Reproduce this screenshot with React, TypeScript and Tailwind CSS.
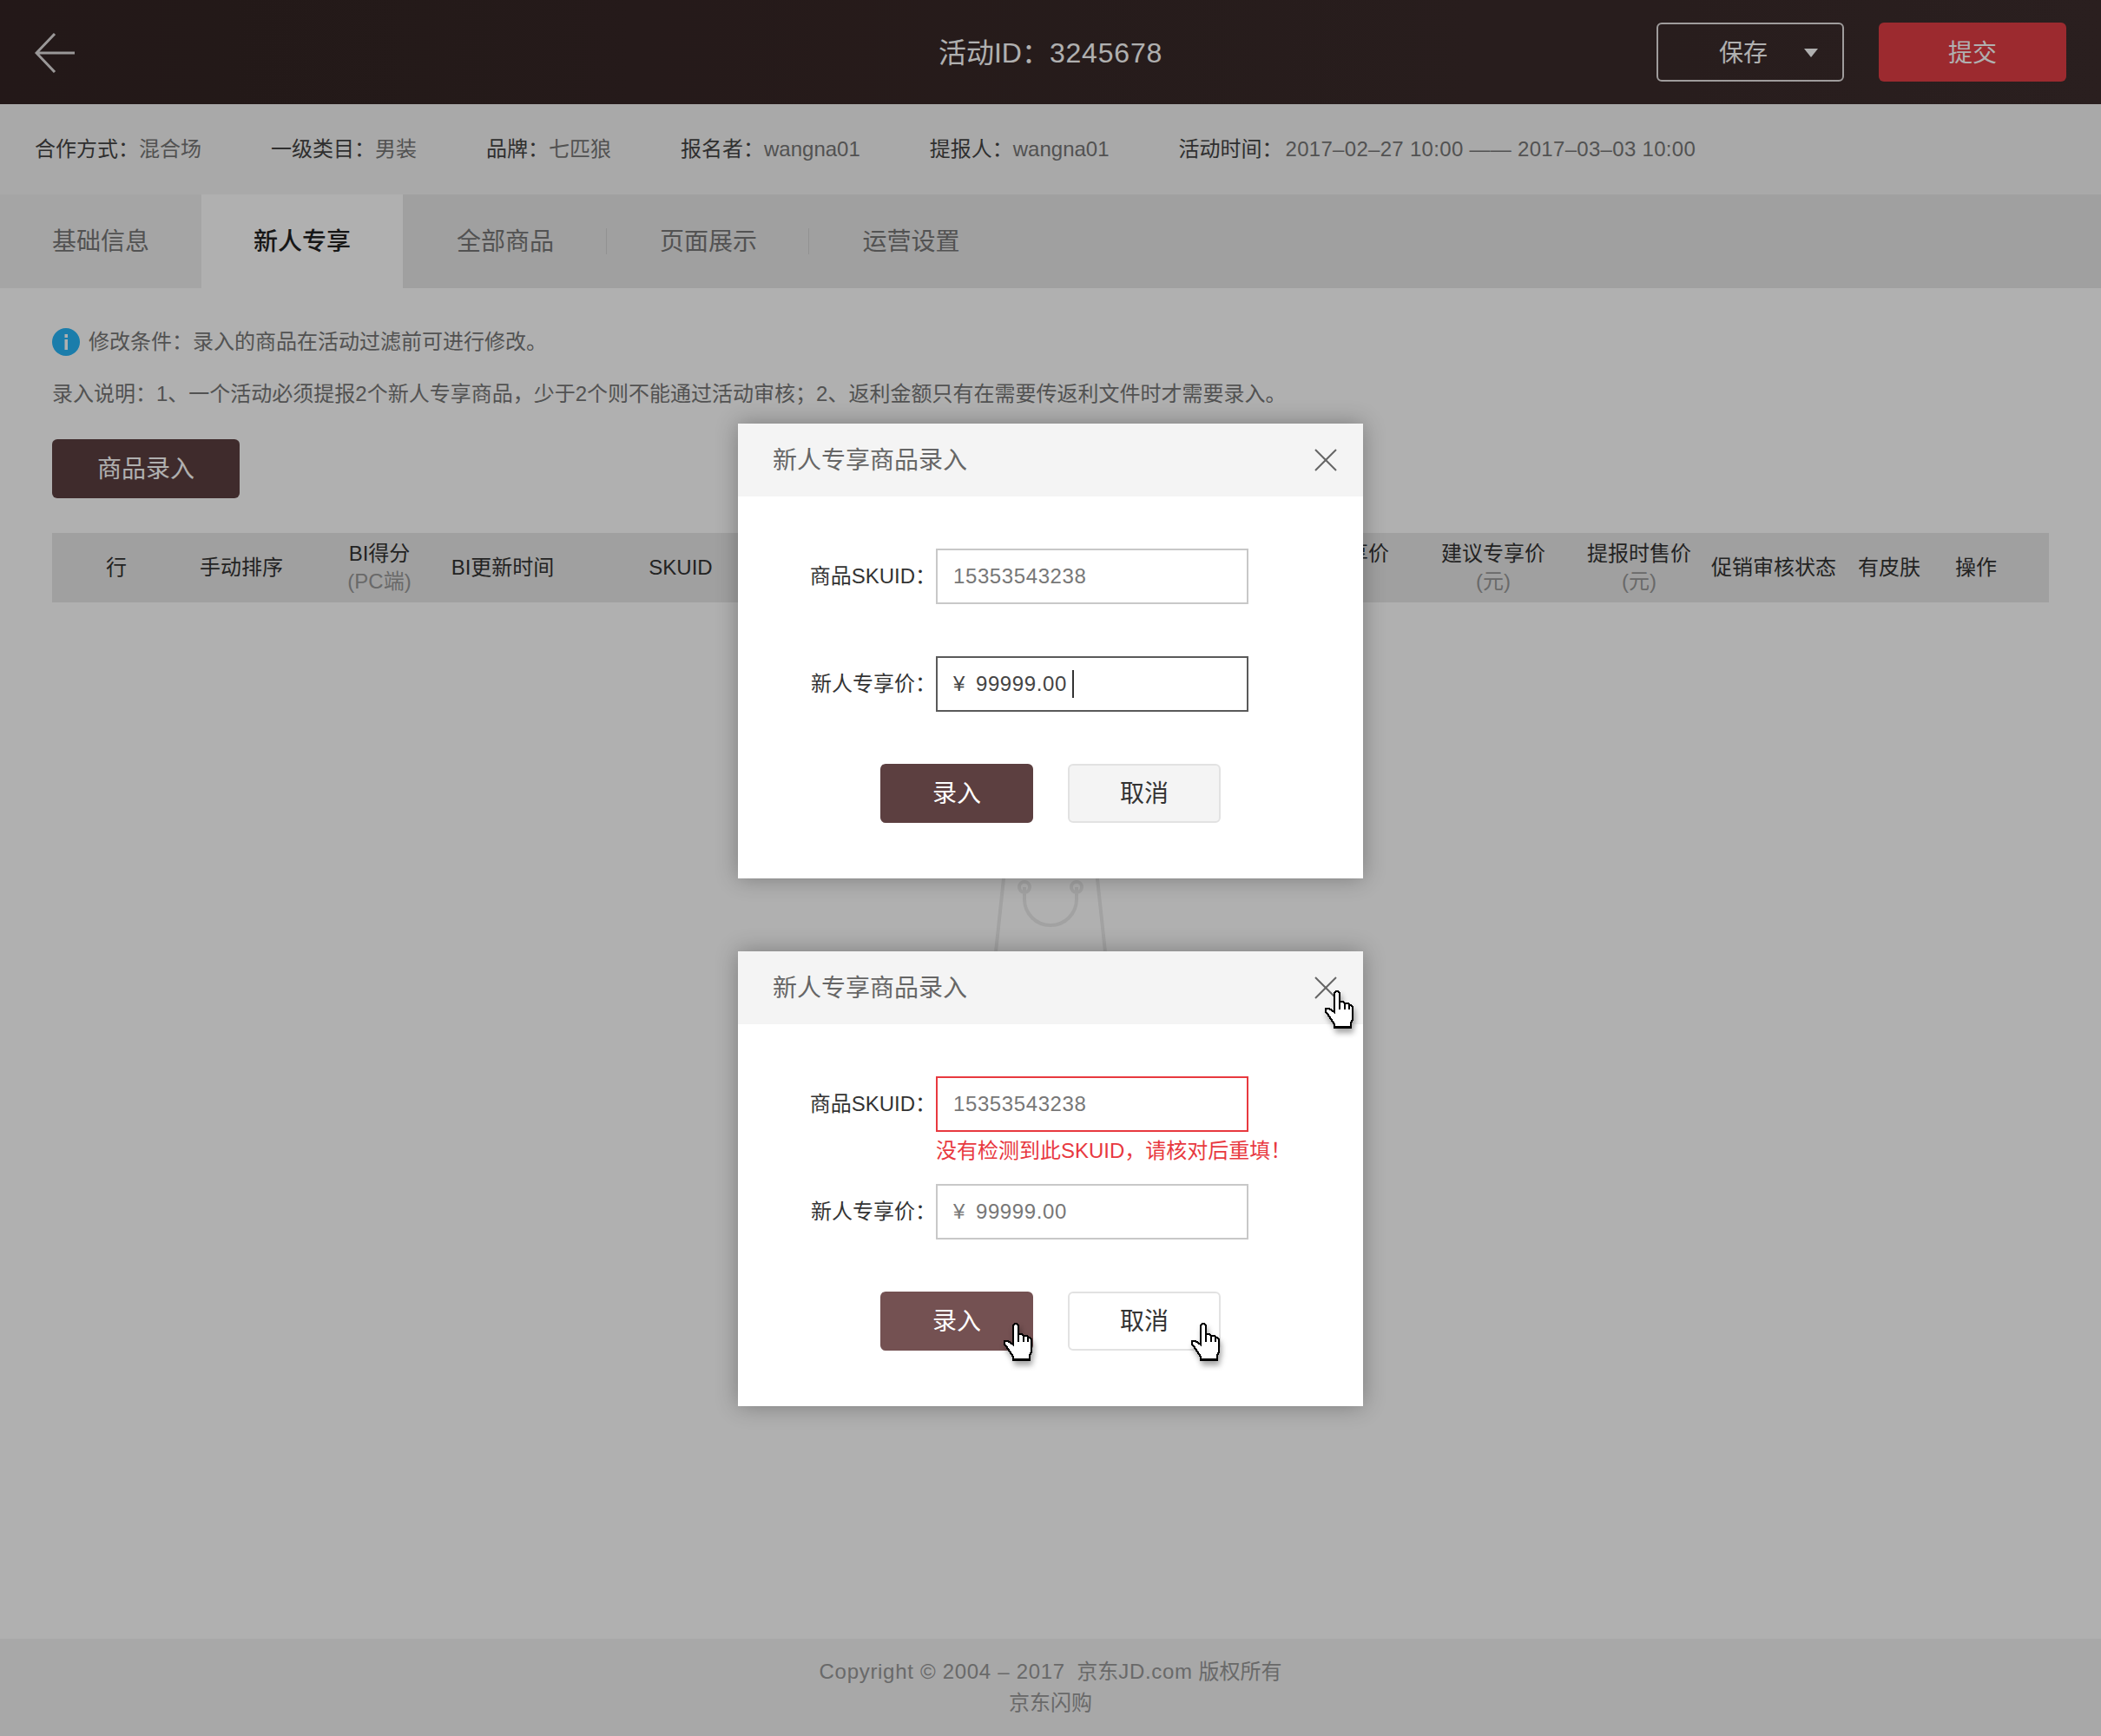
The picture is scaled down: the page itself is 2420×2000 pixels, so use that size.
const FONT = "font-['Liberation_Sans','Noto_Sans_CJK_SC',sans-serif]";

const infoItems = [
  { label: "合作方式：", value: "混合场" },
  { label: "一级类目：", value: "男装" },
  { label: "品牌：", value: "七匹狼" },
  { label: "报名者：", value: "wangna01" },
  { label: "提报人：", value: "wangna01" },
];

const columns = [
  { title: "行" },
  { title: "手动排序" },
  { title: "BI得分", sub: "(PC端)" },
  { title: "BI更新时间" },
  { title: "SKUID" },
  { title: "" },
  { title: "新人专享价", sub: "(元)" },
  { title: "建议专享价", sub: "(元)" },
  { title: "提报时售价", sub: "(元)" },
  { title: "促销审核状态" },
  { title: "有皮肤" },
  { title: "操作" },
];

function Hand() {
  return (
    <svg
      width="34"
      height="45"
      viewBox="0 0 17 22.5"
      shapeRendering="crispEdges"
      className="drop-shadow-[2px_5px_3px_rgba(0,0,0,0.35)]"
    >
      <path
        d="M5.5 1.5 L6.5 0.5 H7.5 L8.5 1.5 V6.5 H10.5 L11.5 7.5 H13.5 L14.5 8.5 H15 L16 9.5 V17 L15 18.5 V21.5 H5.5 V19.5 L3.5 16.5 L1.5 13.5 L0.5 12.5 V10.5 H2.5 L5.5 12.5 Z"
        fill="#fff"
        stroke="#000"
        strokeWidth="1"
      />
      <path d="M8.5 6.5 V11 M11.5 7.5 V11 M14 8.5 V11 M5.5 21 H15" fill="none" stroke="#000" strokeWidth="1" />
    </svg>
  );
}

function CloseIcon() {
  return (
    <svg width="26" height="26" viewBox="0 0 26 26" fill="none" stroke="#666" strokeWidth="2">
      <path d="M1 1 L25 25 M25 1 L1 25" />
    </svg>
  );
}

type ModalProps = {
  error?: boolean;
  focused?: boolean;
  hover?: boolean;
};

function EntryModal({ error, focused, hover }: ModalProps) {
  return (
    <div className="w-[720px] bg-white shadow-[0_0_24px_rgba(0,0,0,0.3)]">
      <div className="flex h-[84px] items-center justify-between bg-[#f4f4f4] pl-10 pr-[30px]">
        <span className="pt-[2px] text-[28px] text-[#666]">新人专享商品录入</span>
        <div className="relative">
          <CloseIcon />
          {hover && (
            <div className="absolute left-[12px] top-[16px]">
              <Hand />
            </div>
          )}
        </div>
      </div>

      <div className="px-0 pb-16 pt-[60px]">
        <div className="flex items-center">
          <label className="w-[228px] text-right text-2xl text-[#333]">商品SKUID：</label>
          <div
            className={
              error
                ? "flex h-16 w-[360px] items-center border-2 border-[#e8393f] pl-[18px] text-2xl tracking-[0.6px] text-[#777]"
                : "flex h-16 w-[360px] items-center border-2 border-[#c8c8c8] pl-[18px] text-2xl tracking-[0.6px] text-[#777]"
            }
          >
            15353543238
          </div>
        </div>

        <div className="h-[60px] pl-[228px] pt-[1px] text-2xl leading-[42px] text-[#e8393f]">
          {error && "没有检测到此SKUID，请核对后重填！"}
        </div>

        <div className="flex items-center">
          <label className="w-[228px] text-right text-2xl text-[#333]">新人专享价：</label>
          <div
            className={
              focused
                ? "flex h-16 w-[360px] items-center border-2 border-[#5a5a5a] pl-[18px] text-2xl tracking-[0.6px] text-[#444]"
                : "flex h-16 w-[360px] items-center border-2 border-[#c8c8c8] pl-[18px] text-2xl tracking-[0.6px] text-[#777]"
            }
          >
            <span className="mr-3">¥</span>
            <span>99999.00</span>
            {focused && <span className="ml-[6px] h-8 w-[2px] bg-[#333]" />}
          </div>
        </div>

        <div className="mt-[60px] flex justify-center gap-10">
          <button
            className={
              hover
                ? "relative h-[68px] w-[176px] rounded-md bg-[#745152] pt-[2px] text-[28px] text-white"
                : "relative h-[68px] w-[176px] rounded-md bg-[#5c3f40] pt-[2px] text-[28px] text-white"
            }
          >
            录入
            {hover && (
              <div className="absolute right-0 top-9">
                <Hand />
              </div>
            )}
          </button>
          <button
            className={
              hover
                ? "relative h-[68px] w-[176px] rounded-md border-2 border-[#e2e2e2] bg-white pt-[2px] text-[28px] text-[#333]"
                : "relative h-[68px] w-[176px] rounded-md border-2 border-[#e2e2e2] bg-[#f4f4f4] pt-[2px] text-[28px] text-[#333]"
            }
          >
            取消
            {hover && (
              <div className="absolute -right-[2px] top-[34px]">
                <Hand />
              </div>
            )}
          </button>
        </div>
      </div>
    </div>
  );
}

export default function App() {
  return (
    <div className={`relative flex min-h-[2000px] w-full flex-col bg-white ${FONT}`}>
      {/* 顶部栏 */}
      <header className="grid h-[120px] grid-cols-[1fr_auto_1fr] items-center bg-gradient-to-r from-[#332423] to-[#3d2d2d] px-10">
        <svg width="46" height="46" viewBox="0 0 46 46" fill="none" stroke="#e0dcdc" strokeWidth="3" className="mt-[2px]">
          <path d="M46 23 H2 M23 1 L2 23 L23 45" />
        </svg>
        <div className="pt-[2px] text-[32px] text-white">
          活动ID：<span className="tracking-[0.8px]">3245678</span>
        </div>
        <div className="flex justify-end gap-10">
          <button className="relative h-[68px] w-[216px] rounded-md border-2 border-[#e6e2e2] pr-4 pt-[3px] text-[28px] text-white">
            保存
            <span className="absolute right-[28px] top-[28px] h-0 w-0 border-x-[8px] border-t-[10px] border-x-transparent border-t-white" />
          </button>
          <button className="h-[68px] w-[216px] rounded-md bg-[#e33d44] pt-[3px] text-[28px] text-white">提交</button>
        </div>
      </header>

      {/* 活动信息 */}
      <div className="flex h-[104px] items-center gap-20 bg-[#f5f5f5] px-10 text-2xl">
        {infoItems.map((item) => (
          <div key={item.label}>
            <span className="text-[#444]">{item.label}</span>
            <span className="text-[#777]">{item.value}</span>
          </div>
        ))}
        <div>
          <span className="text-[#444]">活动时间：</span>
          <span className="ml-[3px] tracking-[0.3px] text-[#777]">2017–02–27 10:00 —— 2017–03–03 10:00</span>
        </div>
      </div>

      {/* 标签页 */}
      <nav className="flex h-[108px] items-center bg-[#e8e8e8] text-[28px] text-[#777]">
        <div className="flex h-full w-[232px] items-center justify-center bg-[#f0f0f0] pt-[2px]">基础信息</div>
        <div className="flex h-full w-[232px] items-center justify-center bg-white pt-[2px] font-medium text-[#222]">新人专享</div>
        <div className="w-[235px] border-r border-[#d4d4d4] pl-[2px] pt-[2px] text-center leading-7">全部商品</div>
        <div className="w-[233px] border-r border-[#d4d4d4] pl-[2px] pt-[2px] text-center leading-7">页面展示</div>
        <div className="w-[233px] pl-[2px] pt-[2px] text-center leading-7">运营设置</div>
      </nav>

      {/* 内容 */}
      <main className="flex-1 px-[60px]">
        <div className="mt-[46px] flex h-8 items-center gap-[10px] text-2xl text-[#777]">
          <svg width="32" height="32" viewBox="0 0 32 32">
            <circle cx="16" cy="16" r="16" fill="#28b6f8" />
            <rect x="14.5" y="7" width="3.5" height="4" fill="#fff" />
            <rect x="14.5" y="13" width="3.5" height="12" fill="#fff" />
          </svg>
          修改条件：录入的商品在活动过滤前可进行修改。
        </div>
        <p className="mt-[26px] text-2xl leading-9 text-[#777]">
          录入说明：1、一个活动必须提报2个新人专享商品，少于2个则不能通过活动审核；2、返利金额只有在需要传返利文件时才需要录入。
        </p>
        <button className="mt-[34px] block h-[68px] w-[216px] rounded-md bg-[#5c3f40] pt-[2px] text-[28px] text-white">商品录入</button>

        <div className="mt-10 grid h-20 grid-cols-[100px_188px_130px_154px_256px_544px_168px_192px_144px_166px_100px_100px] items-center bg-[#e8e8e8] pl-6 text-center text-2xl text-[#333]">
          {columns.map((col, i) => (
            <div key={i} className="leading-8 whitespace-nowrap">
              <div>{col.title}</div>
              {col.sub && <div className="text-[#999]">{col.sub}</div>}
            </div>
          ))}
        </div>

        {/* 空状态 */}
        <svg width="180" height="124" viewBox="0 0 180 124" fill="none" stroke="#ebebeb" strokeWidth="4" className="mx-auto mt-[300px] block">
          <path d="M38 0 L24.7 124 M142 0 L155.3 124" />
          <circle cx="60" cy="28" r="6" />
          <circle cx="120" cy="28" r="6" />
          <path d="M60 28 V42 A30 30 0 0 0 120 42 V28" />
        </svg>
      </main>

      <footer className="h-[112px] bg-[#f3f3f3] pt-5 text-center text-2xl leading-[36px] text-[#999]">
        <div>
          <span className="tracking-[0.7px]">Copyright © 2004 – 2017</span> &nbsp;京东<span className="tracking-[0.7px]">JD.com</span> 版权所有
        </div>
        <div>京东闪购</div>
      </footer>

      {/* 遮罩 */}
      <div className="absolute inset-0 bg-black/[0.31]" />

      {/* 弹窗 */}
      <div className="absolute inset-x-0 top-[488px] flex flex-col items-center gap-[84px]">
        <EntryModal focused />
        <EntryModal error hover />
      </div>
    </div>
  );
}
